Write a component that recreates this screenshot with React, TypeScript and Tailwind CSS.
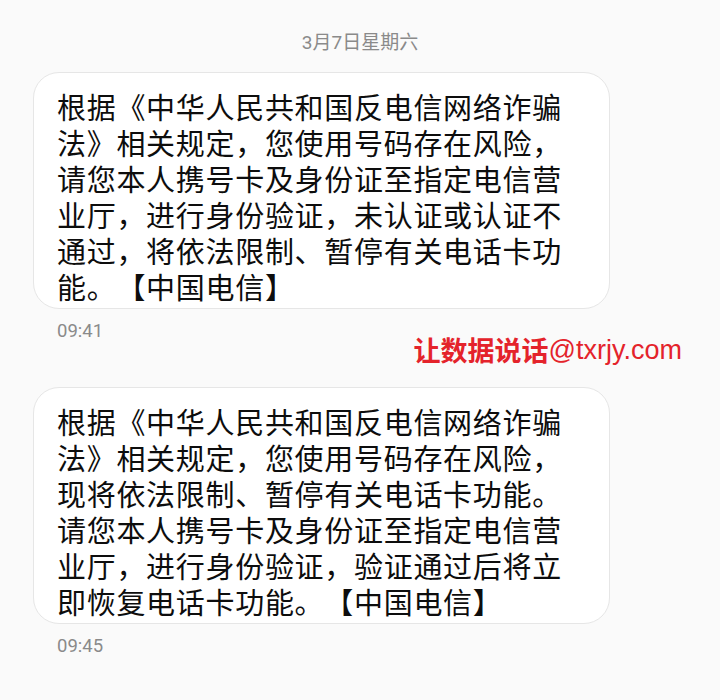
const msgs = [
  {
    lines: [
      "根据《中华人民共和国反电信网络诈骗",
      "法》相关规定，您使用号码存在风险，",
      "请您本人携号卡及身份证至指定电信营",
      "业厅，进行身份验证，未认证或认证不",
      "通过，将依法限制、暂停有关电话卡功",
      "能。【中国电信】",
    ],
    time: "09:41",
  },
  {
    lines: [
      "根据《中华人民共和国反电信网络诈骗",
      "法》相关规定，您使用号码存在风险，",
      "现将依法限制、暂停有关电话卡功能。",
      "请您本人携号卡及身份证至指定电信营",
      "业厅，进行身份验证，验证通过后将立",
      "即恢复电话卡功能。【中国电信】",
    ],
    time: "09:45",
  },
];

function Bubble({ lines }: { lines: string[] }) {
  return (
    <div className="ml-[33px] w-[577px] rounded-[26px] border border-[#e6e6e6] bg-white pl-[23px] pr-2 pt-[15px] pb-1 font-['Noto_Sans_CJK_SC',sans-serif] text-[29px] leading-9 tracking-[0.7px] text-[#0d0d0d] [text-spacing-trim:space-all]">
      {lines.map((l, i) => (
        <div key={i} className="whitespace-nowrap">
          {l}
        </div>
      ))}
    </div>
  );
}

function Time({ t }: { t: string }) {
  return (
    <div className="ml-[57px] mt-[10px] font-['Roboto',sans-serif] text-[18.5px] leading-6 text-[#8a8a8a]">
      {t}
    </div>
  );
}

export default function App() {
  return (
    <div className="flex h-[700px] w-[720px] flex-col overflow-hidden bg-[#fafafa]">
      <div className="pt-[31px] text-center font-['Roboto','Noto_Sans_CJK_SC',sans-serif] text-[19px] leading-6 text-[#8a8a8a]">
        3月7日星期六
      </div>
      <div className="mt-[17px]">
        <Bubble lines={msgs[0].lines} />
      </div>
      <Time t={msgs[0].time} />
      <div className="-mt-[9px] flex justify-end pr-[38px] text-[27px] leading-8 text-[#e4232b]">
        <span className="font-['Noto_Sans_CJK_SC',sans-serif] font-bold">让数据说话</span>
        <span className="font-['Liberation_Sans',Arial,sans-serif]">@txrjy.com</span>
      </div>
      <div className="mt-[21px]">
        <Bubble lines={msgs[1].lines} />
      </div>
      <Time t={msgs[1].time} />
    </div>
  );
}
